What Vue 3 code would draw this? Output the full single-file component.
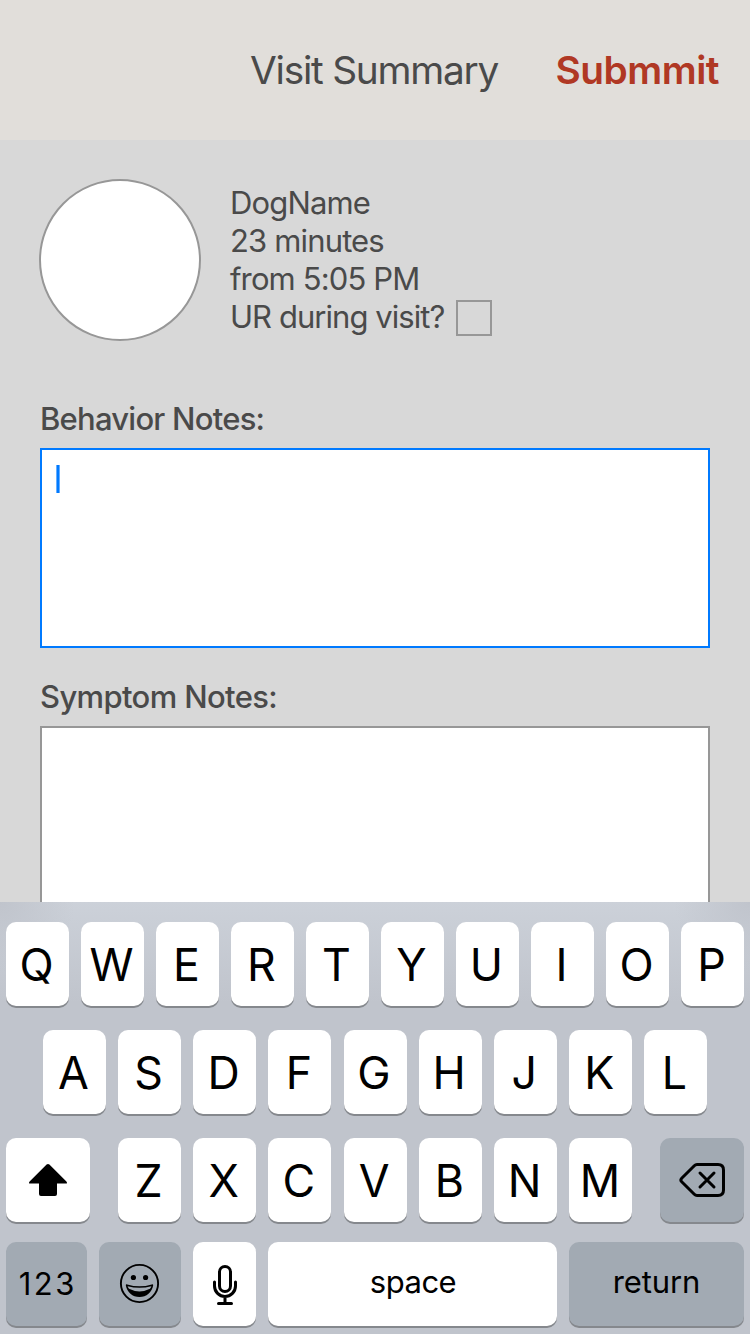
<script setup>
const topRow = [...'QWERTYUIOP']
const homeRow = [...'ASDFGHJKL']
const bottomRow = [...'ZXCVBNM']
</script>

<template>
  <div class="screen">
    <header class="bar">
      <h1 class="title">Visit Summary</h1>
      <button class="submit">Submmit</button>
    </header>

    <main class="content">
      <section class="visit">
        <div class="avatar"></div>
        <div class="details">
          <p class="name">DogName</p>
          <p class="duration">23 minutes</p>
          <p class="start">from 5:05 PM</p>
          <div class="ur"><span class="question">UR during visit?</span><span class="check"></span></div>
        </div>
      </section>

      <section class="field">
        <h2 class="behavior">Behavior Notes:</h2>
        <div class="box active"><span class="caret"></span></div>
      </section>
      <section class="field">
        <h2 class="symptom">Symptom Notes:</h2>
        <div class="box"></div>
      </section>
    </main>

    <div class="keyboard">
      <div class="row">
        <div v-for="k in topRow" :key="k" class="key"><span>{{ k }}</span></div>
      </div>
      <div class="row home">
        <div v-for="k in homeRow" :key="k" class="key"><span>{{ k }}</span></div>
      </div>
      <div class="row">
        <div class="key wide">
          <svg width="84" height="84" viewBox="0 0 84 84">
            <path d="M40.6 26.6Q42 25.4 43.4 26.6L60.4 43.4Q62 45.6 59.6 45.6H51V56Q51 58 49 58H35Q33 58 33 56V45.6H24.4Q22 45.6 23.6 43.4Z" fill="#000" />
          </svg>
        </div>
        <div class="letters">
          <div v-for="k in bottomRow" :key="k" class="key"><span>{{ k }}</span></div>
        </div>
        <div class="key wide dark">
          <svg width="84" height="84" viewBox="0 0 84 84" fill="none" stroke="#000" stroke-width="3" stroke-linecap="round" stroke-linejoin="round">
            <path d="M37 26.5H58Q63.5 26.5 63.5 32V52Q63.5 57.5 58 57.5H37Q35.5 57.5 34.3 56.3L21.7 43.8Q20 42 21.7 40.2L34.3 27.7Q35.5 26.5 37 26.5Z" />
            <path d="M40 35L54 49M54 35L40 49" />
          </svg>
        </div>
      </div>
      <div class="row last">
        <div class="key dark numbers">123</div>
        <div class="key dark emoji">
          <svg width="82" height="84" viewBox="0 0 82 84">
            <circle cx="40.5" cy="41.5" r="18.6" fill="none" stroke="#000" stroke-width="1.9" />
            <circle cx="34.4" cy="35.5" r="2.6" />
            <circle cx="46.6" cy="35.5" r="2.6" />
            <path d="M26.8 43.3Q26.8 42 28.3 42.5Q40.5 46.2 52.7 42.5Q54.2 42 54.2 43.3C53 50.5 47.5 55 40.5 55S28 50.5 26.8 43.3Z" />
            <path d="M28.6 44.2Q40.5 47.4 52.4 44.2Q52 45.6 51 46.8Q40.5 52.2 30 46.8Q29 45.6 28.6 44.2Z" fill="#a2aab3" />
          </svg>
        </div>
        <div class="key">
          <svg width="63" height="84" viewBox="0 0 63 84" fill="none" stroke="#000" stroke-width="3" stroke-linecap="round">
            <rect x="26.5" y="24.5" width="11" height="25" rx="5.5" />
            <path d="M21.5 40V44A10.5 10.5 0 0 0 42.5 44V40M32 55V61.5M25.5 61.5H38.5" />
          </svg>
        </div>
        <div class="key space"><span>space</span></div>
        <div class="key dark return"><span>return</span></div>
      </div>
    </div>
  </div>
</template>

<style>
body { margin: 0; }
</style>

<style scoped>
.screen {
  width: 750px;
  height: 1334px;
  overflow: hidden;
  display: flex;
  flex-direction: column;
  background: #d8d8d8;
  color: #4a4a4a;
  font-family: Inter, "Liberation Sans", sans-serif;
}
h1, h2, p { margin: 0; font-weight: 400; white-space: nowrap; }
.bar {
  flex: none;
  height: 140px;
  box-sizing: border-box;
  padding: 0 31px 0 250px;
  display: flex;
  justify-content: space-between;
  align-items: center;
  background: #e1deda;
}
.title { font-size: 38.8px; letter-spacing: -1.25px; line-height: 48px; }
.submit {
  border: 0;
  padding: 0;
  background: none;
  font: 600 38.8px/48px Inter, "Liberation Sans", sans-serif;
  letter-spacing: -0.5px;
  color: #b03824;
}
.content {
  flex: none;
  height: 762px;
  box-sizing: border-box;
  padding: 39px 40px 0;
  overflow: hidden;
}
.visit { display: flex; gap: 29px; margin-left: -1px; height: 219px; }
.avatar {
  width: 162px;
  height: 162px;
  box-sizing: border-box;
  border: 2px solid #979797;
  border-radius: 50%;
  background: #fff;
}
.details {
  padding-top: 5px;
  font-size: 31px;
  line-height: 38px;
}
.name, .duration { letter-spacing: -0.85px; }
.start { letter-spacing: -0.87px; }
.question { width: 214px; letter-spacing: -0.95px; }
.ur { display: flex; gap: 12px; white-space: nowrap; }
.check {
  width: 36px;
  height: 36px;
  margin-top: 2px;
  box-sizing: border-box;
  border: 2px solid #979797;
}
.field { height: 278px; }
.field h2 {
  height: 50px;
  font-size: 31px;
  font-weight: 500;
  line-height: 42px;
}
.field .behavior { letter-spacing: -0.76px; }
.field .symptom { letter-spacing: -0.64px; }
.box {
  height: 200px;
  box-sizing: border-box;
  border: 2px solid #979797;
  background: #fff;
}
.box.active { border-color: #007aff; padding: 15px 14px; }
.caret {
  display: block;
  width: 4px;
  height: 28px;
  background: linear-gradient(90deg, #66aeff 1px, #007aff 1px 3px, #66aeff 3px);
}
.keyboard {
  flex: none;
  height: 432px;
  box-sizing: border-box;
  padding: 20px 6px 0;
  color: #000;
  background:
    radial-gradient(ellipse 75px 70px at 0 0, #c0c4cc, #c0c4cc00),
    radial-gradient(ellipse 75px 70px at 100% 0, #c0c4cc, #c0c4cc00),
    linear-gradient(#ccd1d9, #c0c4cc 100px);
}
.row { display: flex; gap: 12px; height: 84px; margin-bottom: 24px; justify-content: space-between; }
.row.home { padding: 0 37px; gap: 0; }
.row.last { margin-top: -4px; }
.letters { width: 514.4px; margin-right: -0.4px; display: flex; justify-content: space-between; }
.key {
  flex: none;
  width: 63px;
  height: 84px;
  display: flex;
  align-items: center;
  justify-content: center;
  border-radius: 10px;
  background: #fff;
  box-shadow: 0 2px 0 #85888d;
  font-size: 44.7px;
  line-height: 84px;
}
.key span { margin: 2px 2px 0 0; }
.key svg { display: block; flex: none; }
.wide { width: 84px; }
.dark { background: #a2aab3; }
.numbers { width: 81px; font-size: 31px; letter-spacing: 2.5px; text-indent: 2.5px; }
.emoji { width: 82px; }
.space { width: 289px; font-size: 31px; letter-spacing: -0.5px; }
.return { width: 175px; font-size: 31px; letter-spacing: -0.1px; }
.key.space span { margin: -4px 0 0 1px; }
.key.return span { margin: -4px 0 0; }
</style>
